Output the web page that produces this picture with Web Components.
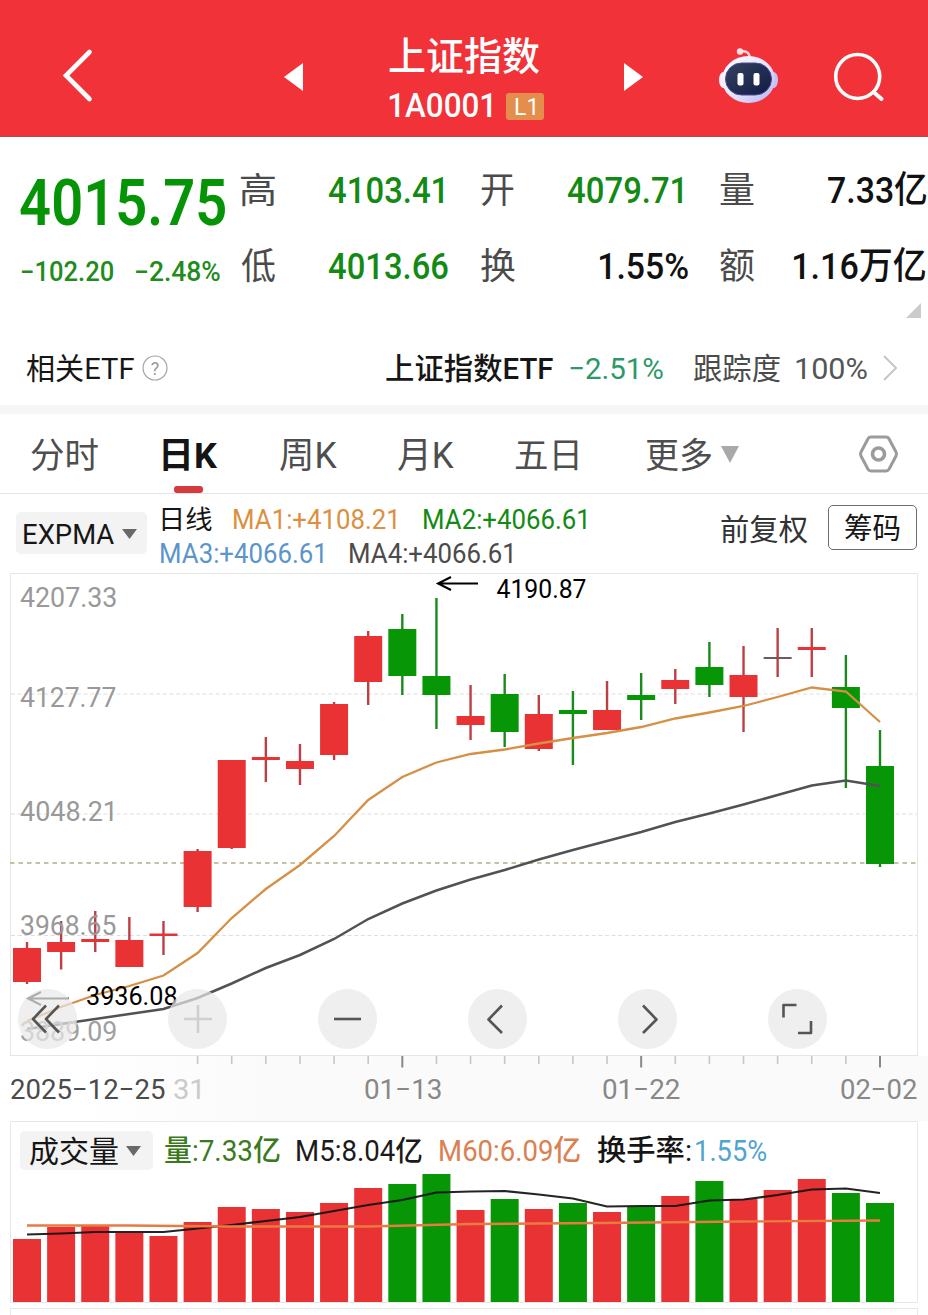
<!DOCTYPE html>
<html lang="zh-CN">
<head>
<meta charset="utf-8">
<title>上证指数 1A0001</title>
<style>
html,body{margin:0;padding:0;background:#fff}
body{width:928px;height:1315px;overflow:hidden;font-family:Roboto,"Noto Sans CJK SC",sans-serif}
</style>
</head>
<body>
<stock-page></stock-page>
<script>
const FONT = 'Roboto, "Noto Sans CJK SC", sans-serif';
const NS = 'http://www.w3.org/2000/svg';
const meter = document.createElement('canvas').getContext('2d');

// Builds an SVG text whose visible glyphs span `width` pixels from `x`.
function fitted(str, x, base, width, size, weight, fill) {
  meter.font = `${weight} ${size}px ${FONT}`;
  const m = meter.measureText(str);
  const w = /\d{2}1$|\.\d1$/.test(str) ? width * 0.975 : width;
  const k = w / (m.actualBoundingBoxLeft + m.actualBoundingBoxRight);
  const t = document.createElementNS(NS, 'text');
  t.setAttribute('transform', `translate(${x + m.actualBoundingBoxLeft * k} ${base}) scale(${k} 1)`);
  t.setAttribute('font-family', FONT);
  t.setAttribute('font-size', size);
  t.setAttribute('font-weight', weight);
  t.setAttribute('fill', fill);
  t.textContent = str;
  return t;
}

// <fit-text w size weight gap>: box height is the cap height, its bottom edge is the baseline.
class FitText extends HTMLElement {
  connectedCallback() {
    if (this.shadowRoot) return;
    const w = +this.getAttribute('w'), s = +this.getAttribute('size');
    const h = Math.round(s * 0.711), gap = +(this.getAttribute('gap') || 0);
    const root = this.attachShadow({mode: 'open'});
    root.innerHTML = `<style>:host{display:block;flex:none;width:${w}px;height:${h}px;margin-left:${gap}px}
      svg{display:block;overflow:visible}</style><svg width="${w}" height="${h}"></svg>`;
    root.querySelector('svg').append(
      fitted(this.textContent.trim(), 0, h, w, s, this.getAttribute('weight') || 400, 'currentColor'));
  }
}
customElements.define('fit-text', FitText);

function define(name, html, after) {
  const tpl = document.createElement('template');
  tpl.innerHTML = html;
  customElements.define(name, class extends HTMLElement {
    connectedCallback() {
      if (this.shadowRoot) return;
      this.attachShadow({mode: 'open'}).append(document.importNode(tpl.content, true));
      if (after) after(this.shadowRoot, this);
    }
  });
}

define('nav-bar', `
<style>
:host{display:flex;height:136px;background:#f13239;border-bottom:1px solid #a94a56;color:#fff;box-sizing:content-box}
svg{display:block;flex:none}
.title{width:155px;margin-left:85px;padding-top:42px;display:flex;flex-direction:column;gap:23px}
.code{display:flex;align-items:flex-end}
.badge{width:39px;height:27px;border-radius:3px;background:#e38e4c;margin:0 0 -3px 12px;display:flex;align-items:center;justify-content:center}
</style>
<svg width="304" height="136" fill="none" stroke="#fff"><path d="M89.500 52 66 75.500 89.500 99" stroke-width="4.600" stroke-linecap="round"/><path d="M284 77 303 63v28z" fill="#fff" stroke="none"/></svg>
<div class="title">
  <fit-text w="151" size="39" weight="500">上证指数</fit-text>
  <div class="code"><fit-text w="105" size="34" weight="500">1A0001</fit-text><div class="badge"><fit-text w="20" size="24">L1</fit-text></div></div>
</div>
<svg width="384" height="136" viewBox="544 0 384 136" fill="none">
  <defs>
    <linearGradient id="shell" x1="0" y1="0" x2="1" y2="1"><stop offset="0" stop-color="#fff"/><stop offset=".55" stop-color="#e6e1fb"/><stop offset="1" stop-color="#b4aff2"/></linearGradient>
    <linearGradient id="face" x1="0" y1="0" x2="1" y2="1"><stop offset="0" stop-color="#34425f"/><stop offset="1" stop-color="#111b45"/></linearGradient>
  </defs>
  <path d="M624 63v28l19-14z" fill="#fff"/>
  <path d="M741 51.500c5-1 8 1 9 6" stroke="#ffd5dc" stroke-width="2.400"/><circle cx="740" cy="51.500" r="3.200" fill="#ffe0e4"/>
  <ellipse cx="723.500" cy="80" rx="4.500" ry="8" fill="#f3effd"/><ellipse cx="773.500" cy="80" rx="4.500" ry="8" fill="#c4c1fa"/>
  <ellipse cx="748.500" cy="79.500" rx="26.500" ry="23.500" fill="url(#shell)"/>
  <rect x="725.500" y="63" width="46" height="32" rx="16" fill="url(#face)" stroke="#4b4c91" stroke-width="1"/>
  <rect x="737.500" y="73" width="6" height="12.500" rx="2" fill="#fff"/><rect x="753.500" y="73" width="6" height="12.500" rx="2" fill="#fff"/>
  <circle cx="857.700" cy="76.500" r="22" stroke="#fff" stroke-width="3.600"/><path d="m873.500 92 8 7" stroke="#fff" stroke-width="4" stroke-linecap="round"/>
</svg>`);

define('quote-panel', `
<style>
:host{display:flex;height:205px;color:#111}
.now{width:241px;padding:0 0 0 20px;box-sizing:border-box;color:#069407}
.big{padding-top:42px}
.chg{display:flex;padding-top:37px;color:#1f8c20}
.grid{width:687px}
.row{display:flex;align-items:flex-end;height:66px}
.row+.row{height:76px}
.l{color:#4b4b4b}.g{color:#128a14}
.more{display:flex;justify-content:flex-end;padding:24px 7px 0 0}
</style>
<div class="now">
  <div class="big"><fit-text w="205" size="64" weight="600">4015.75</fit-text></div>
  <div class="chg"><fit-text w="91" size="27" weight="500" gap="2">−102.20</fit-text><fit-text w="84" size="27" weight="500" gap="23">−2.48%</fit-text></div>
</div>
<div class="grid">
  <div class="row"><fit-text class="l" w="34" size="35">高</fit-text><fit-text class="g" w="117" size="37" weight="500" gap="54">4103.41</fit-text><fit-text class="l" w="33" size="36" gap="35">开</fit-text><fit-text class="g" w="117" size="37" weight="500" gap="54">4079.71</fit-text><fit-text class="l" w="34" size="36" gap="35">量</fit-text><fit-text w="99" size="37" weight="500" gap="74">7.33亿</fit-text></div>
  <div class="row"><fit-text class="l" w="34" size="36">低</fit-text><fit-text class="g" w="119" size="37" weight="500" gap="54">4013.66</fit-text><fit-text class="l" w="34" size="36" gap="33">换</fit-text><fit-text w="88" size="37" weight="500" gap="85">1.55%</fit-text><fit-text class="l" w="34" size="36" gap="32">额</fit-text><fit-text w="132" size="37" weight="500" gap="40">1.16万亿</fit-text></div>
  <div class="more"><svg width="15" height="15"><path d="M15 0v15H0z" fill="#cbcbcb"/></svg></div>
</div>`);

define('etf-row', `
<style>
:host{display:flex;align-items:flex-end;height:63px;box-sizing:content-box;padding-bottom:0;border-bottom:9px solid #f6f6f6}
.in{display:flex;align-items:flex-end;height:37px;align-self:flex-start}
svg{display:block;flex:none;overflow:visible}
</style>
<div class="in">
<fit-text w="108" size="30" gap="26" style="color:#161616">相关ETF</fit-text>
<svg width="26" height="26" style="margin:0 0 -2px 8px"><circle cx="13" cy="13" r="12" fill="none" stroke="#a5a5a5" stroke-width="1.200"/><text x="13" y="19.500" font-family="Roboto" font-size="18" text-anchor="middle" fill="#999">?</text></svg>
<fit-text w="167" size="30" weight="500" gap="218" style="color:#161616">上证指数ETF</fit-text>
<fit-text w="93" size="30" gap="17" style="color:#2c9a68">−2.51%</fit-text>
<fit-text w="86" size="30" gap="31" style="color:#4b4b4b">跟踪度</fit-text>
<fit-text w="71" size="30" gap="16" style="color:#555">100%</fit-text>
<svg width="14" height="25" style="margin:0 0 -1px 16px" fill="none"><path d="m1 1 12 12L1 25" stroke="#c6c6c6" stroke-width="2"/></svg>
</div>`);

define('period-tabs', `
<style>
:host{display:flex;align-items:flex-end;height:79px;border-bottom:1px solid #e4e4e4;color:#4e4e4e;position:relative}
.tab{display:flex;align-items:flex-end;padding-bottom:25px}
.on{color:#141414}
.bar{position:absolute;left:174px;top:72px;width:29px;height:7px;border-radius:3px;background:#d53a3c}
svg{display:block;flex:none;overflow:visible}
</style>
<div class="tab"><fit-text w="67" size="35" gap="31">分时</fit-text></div>
<div class="tab on"><fit-text w="55" size="36" weight="700" gap="65">日K</fit-text></div>
<div class="tab"><fit-text w="57" size="36" gap="62">周K</fit-text></div>
<div class="tab"><fit-text w="56" size="36" gap="61">月K</fit-text></div>
<div class="tab"><fit-text w="63" size="35" gap="61">五日</fit-text></div>
<div class="tab"><fit-text w="66" size="35" gap="68">更多</fit-text><svg width="18" height="17" style="margin:0 0 5px 9px"><path d="M0 0h18L9 17z" fill="#a9a9a9"/></svg></div>
<svg width="40" height="38" style="margin:0 0 20px 119.500px" fill="none" stroke="#9b9b9b"><path d="M12 2h15q2 0 3 1.700l7 13.300q1 2 0 4l-7 13.300q-1 1.700-3 1.700H12q-2 0-3-1.700L2 21q-1-2 0-4L9 3.700Q10 2 12 2z" stroke-width="3"/><circle cx="19.500" cy="19" r="6" stroke-width="3.600"/></svg>
<div class="bar"></div>`);

define('drop-chip', `
<style>
:host{display:flex;align-items:center;gap:8px;flex:none;box-sizing:border-box;background:#f3f3f3;border-radius:5px;color:#161616}
svg{display:block}
</style><slot></slot><svg width="15" height="10"><path d="M0 0h15L7.500 10z" fill="#696969"/></svg>`);

define('indicator-bar', `
<style>
:host{display:flex;height:79px}
drop-chip{width:131px;height:42px;margin:18px 0 0 16px;padding:2px 0 0 8px}
.ma{width:444px;margin-left:13px;padding-top:15.500px}
.r{display:flex}.r+.r{margin-top:15px}
.adj{margin:25px 0 0 117px;color:#333}
.chip{box-sizing:border-box;width:89px;height:45px;margin:11px 0 0 20px;border:1px solid #6d6d6d;border-radius:5px;display:flex;align-items:center;justify-content:center;color:#161616;padding-top:2px}
</style>
<drop-chip><fit-text w="90" size="28">EXPMA</fit-text></drop-chip>
<div class="ma">
 <div class="r"><fit-text w="50" size="26.500" gap="2" style="color:#161616">日线</fit-text><fit-text w="166" size="27" weight="450" gap="22" style="color:#db903f">MA1:+4108.21</fit-text><fit-text w="166" size="27" weight="450" gap="24" style="color:#128a14">MA2:+4066.61</fit-text></div>
 <div class="r"><fit-text w="166" size="27" weight="450" gap="1" style="color:#5b95cb">MA3:+4066.61</fit-text><fit-text w="166" size="27" weight="450" gap="23" style="color:#4b4b4b">MA4:+4066.61</fit-text></div>
</div>
<fit-text class="adj" w="87" size="30">前复权</fit-text>
<div class="chip"><fit-text w="55" size="29">筹码</fit-text></div>`);

define('tool-button', `
<style>:host{display:block;width:59px;height:60px;border-radius:50%;background:rgba(232,232,232,.7)}
svg{display:block}</style><svg width="59" height="60" fill="none" stroke="#555" stroke-width="2.600" stroke-linejoin="round"><path/></svg>`,
(root, el) => {
  const p = root.querySelector('path');
  p.setAttribute('d', el.getAttribute('d'));
  if (el.hasAttribute('off')) p.setAttribute('stroke', '#cfcfcf');
});

const XS = Array.from({length: 26}, (_, i) => 27 + i * 34.12);
const R = '#e93234', G = '#069606';
const line = ys => ys.map((y, i) => `${XS[i].toFixed(1)},${y}`).join(' ');

// body top, body bottom, high, low, direction
const CANDLES = [[948,982,942,984,R],[942,952,921,969.5,R],[939,942,911,952,R],[940,967,917,967,R],[933.5,936,921,955,R],
[851,907,849,912,R],[760,848,760,849,R],[757,760,737,782,R],[761,769,744,785,R],[704,755,702,760,R],[636,682,631,705,R],
[629,676,614,695,G],[676,695,598,729,G],[716,725,685,740,R],[694,732,674,747,G],[714,749,695,751,R],[710,714,691,765,G],
[710,730,681,730,R],[695,700,673,720,G],[680,689,669,704,R],[667,685,642,697,G],[675,697,646,732,R],[657,659,628,677,R],
[647,650,628,677,R],[687,708,655,788,G],[766,864,730,867,G]];
const MA1 = [1021,1007,995,986,975.5,953,918,889,865,836,800,777,762.5,754,749.5,743.5,738,733,727,718.5,712.5,706,697,687.5,691.5,722];
const MA4 = [1029,1024,1019,1014,1009,998,983.5,968,955,939,919,903.5,890.5,879.5,870,859.5,850,841,832,822,813.5,804.5,795,785.5,780.5,786];

define('candle-chart', `
<style>
:host{display:block;position:relative;height:548px}
svg{display:block}
.tools{position:absolute;left:17.500px;top:416px;display:flex;gap:91px}
</style>
<svg width="928" height="548" viewBox="0 573 928 548"></svg>
<div class="tools">
<tool-button d="M28 16.500 15 30l13 13.500M41 16.500 28 30l13 13.500"></tool-button>
<tool-button off d="M16 30h28M30 16v28"></tool-button>
<tool-button d="M16 30h27"></tool-button>
<tool-button d="M34 16.500 20.500 30.500 34 44"></tool-button>
<tool-button d="M25 16.500 38.500 30.500 25 44"></tool-button>
<tool-button d="M15.500 28.500V16H28.500M43 32v12H30"></tool-button>
</div>`, root => {
  const svg = root.querySelector('svg');
  let s = `<defs><linearGradient id="fade"><stop offset=".08" stop-color="#fff"/><stop offset=".3" stop-color="#fafafa"/></linearGradient></defs>
  <rect y="1056" width="928" height="65" fill="url(#fade)"/>
  <rect x="10.500" y="573.500" width="907" height="482" fill="#fff" stroke="#e6e6e6"/>
  <path d="M11 694h906M11 814h906M11 935.500h906" stroke="#dedede" stroke-dasharray="4 2.600"/>
  <path d="M10 863h907" stroke="#b3ad84" stroke-width="1.600" stroke-dasharray="4.500 4"/>`;
  CANDLES.forEach(([a, b, h, l, c], i) => {
    const x = XS[i], body = i === 22 ? '#705a5a' : c, wick = c === R ? '#bd3e43' : '#198a1b';
    s += `<path d="M${x} ${h}V${l}" stroke="${wick}" stroke-width="2.400"/><rect x="${x - 14}" y="${a}" width="28" height="${b - a}" fill="${body}"/>`;
  });
  s += `<polyline points="${line(MA4)}" fill="none" stroke="#505254" stroke-width="2.500"/>
  <polyline points="${line(MA1)}" fill="none" stroke="#d59045" stroke-width="2.300"/>
  <path d="M478 583.500H438M451 577l-13 6.500 13 6.500" fill="none" stroke="#000" stroke-width="2"/>
  <path d="M69 998.500H28M41 992l-13 6.500 13 6.500" fill="none" stroke="#222" stroke-width="2"/>`;
  for (let i = 5; i < 26; i++) {
    const major = i === 11 || i === 18 || i === 25;
    s += `<path d="M${XS[i]} 1056V${major ? 1067.5 : 1064}" stroke="${major ? '#888' : '#c6c6c6'}" stroke-width="${major ? 2 : 1.6}"/>`;
  }
  svg.innerHTML = s;
  [['4207.33',20,607,96,'#999'],['4127.77',20,707,96,'#999'],['4048.21',20,821,95,'#999'],['3968.65',21,935,95,'#999'],['3889.09',21,1041,95,'#a0a0a0'],
   ['2025−12−25',11,1098.5,154,'#4b4b4b'],['31',174,1098.5,26,'#cacaca'],['01−13',365,1098.5,76,'#888'],['01−22',603,1098.5,77,'#888'],['02−02',841,1098.5,76,'#888']]
  .forEach(([t, x, y, w, c]) => svg.append(fitted(t, x, y, w, 27.5, 450, c)));
  svg.append(fitted('4190.87', 496.5, 598, 89.5, 26, 400, '#000'), fitted('3936.08', 87, 1005, 90, 26, 400, '#000'));
});

const TOPS = [1239,1227,1226,1233,1236,1222,1207,1209,1212,1203,1188,1184,1174,1210,1199,1209,1203,1212,1207,1196,1181,1199,1190,1179,1193,1203];
const M5 = [1234.5,1233.5,1232,1232,1232,1228.5,1225,1221,1217,1211,1205,1200,1192.5,1191.5,1191,1194.5,1198.5,1206.5,1206,1206,1200.5,1199.5,1195,1189.5,1188.5,1193];

define('volume-panel', `
<style>
:host{display:block;width:908px;margin-left:10px;height:182px;box-sizing:border-box;border:1px solid #e8e8e8}
.head{display:flex;align-items:flex-end;height:39px;margin-top:9px}
drop-chip{width:133px;height:39px;margin-left:9px;padding:1px 0 0 10px}
.v{display:flex;padding-bottom:9px}
svg{display:block}
</style>
<div class="head">
<drop-chip><fit-text w="88" size="30">成交量</fit-text></drop-chip>
<div class="v"><fit-text w="115" size="29" weight="450" gap="12" style="color:#3a7a1c">量:7.33亿</fit-text><fit-text w="125" size="29" weight="450" gap="17" style="color:#1b1b1b">M5:8.04亿</fit-text><fit-text w="140" size="29" weight="450" gap="18" style="color:#db8051">M60:6.09亿</fit-text><fit-text w="94" size="29" weight="450" gap="17" style="color:#161616">换手率:</fit-text><fit-text w="70" size="29" weight="450" gap="5" style="color:#50a4d0">1.55%</fit-text></div>
</div>
<svg width="906" height="132" viewBox="11 1170 906 132"></svg>`, root => {
  root.querySelector('svg').innerHTML =
    TOPS.map((y, i) => `<rect x="${XS[i] - 14}" y="${y}" width="28" height="${1303 - y}" fill="${CANDLES[i][4]}"/>`).join('') +
    `<polyline points="${line(M5)}" fill="none" stroke="#111" stroke-opacity=".92" stroke-width="2.200"/>
     <polyline points="27,1225.500 129,1225.500 231,1226.500 368,1226.500 470,1224 600,1223 743,1221.500 880,1220.500" fill="none" stroke="#e97a42" stroke-width="2.400"/>`;
});

define('stock-page', `
<style>
:host{display:flex;flex-direction:column;width:928px;height:1315px;overflow:hidden;background:#fff}
:host>*{flex:none}
nav-bar,quote-panel,etf-row,period-tabs,indicator-bar,candle-chart,volume-panel{flex:none}
.next{flex:none;width:908px;height:20px;margin:5px 0 0 10px;box-sizing:border-box;border:1px solid #e8e8e8}
</style>
<nav-bar></nav-bar><quote-panel></quote-panel><etf-row></etf-row><period-tabs></period-tabs>
<indicator-bar></indicator-bar><candle-chart></candle-chart><volume-panel></volume-panel><div class="next"></div>`);
</script>
</body>
</html>
